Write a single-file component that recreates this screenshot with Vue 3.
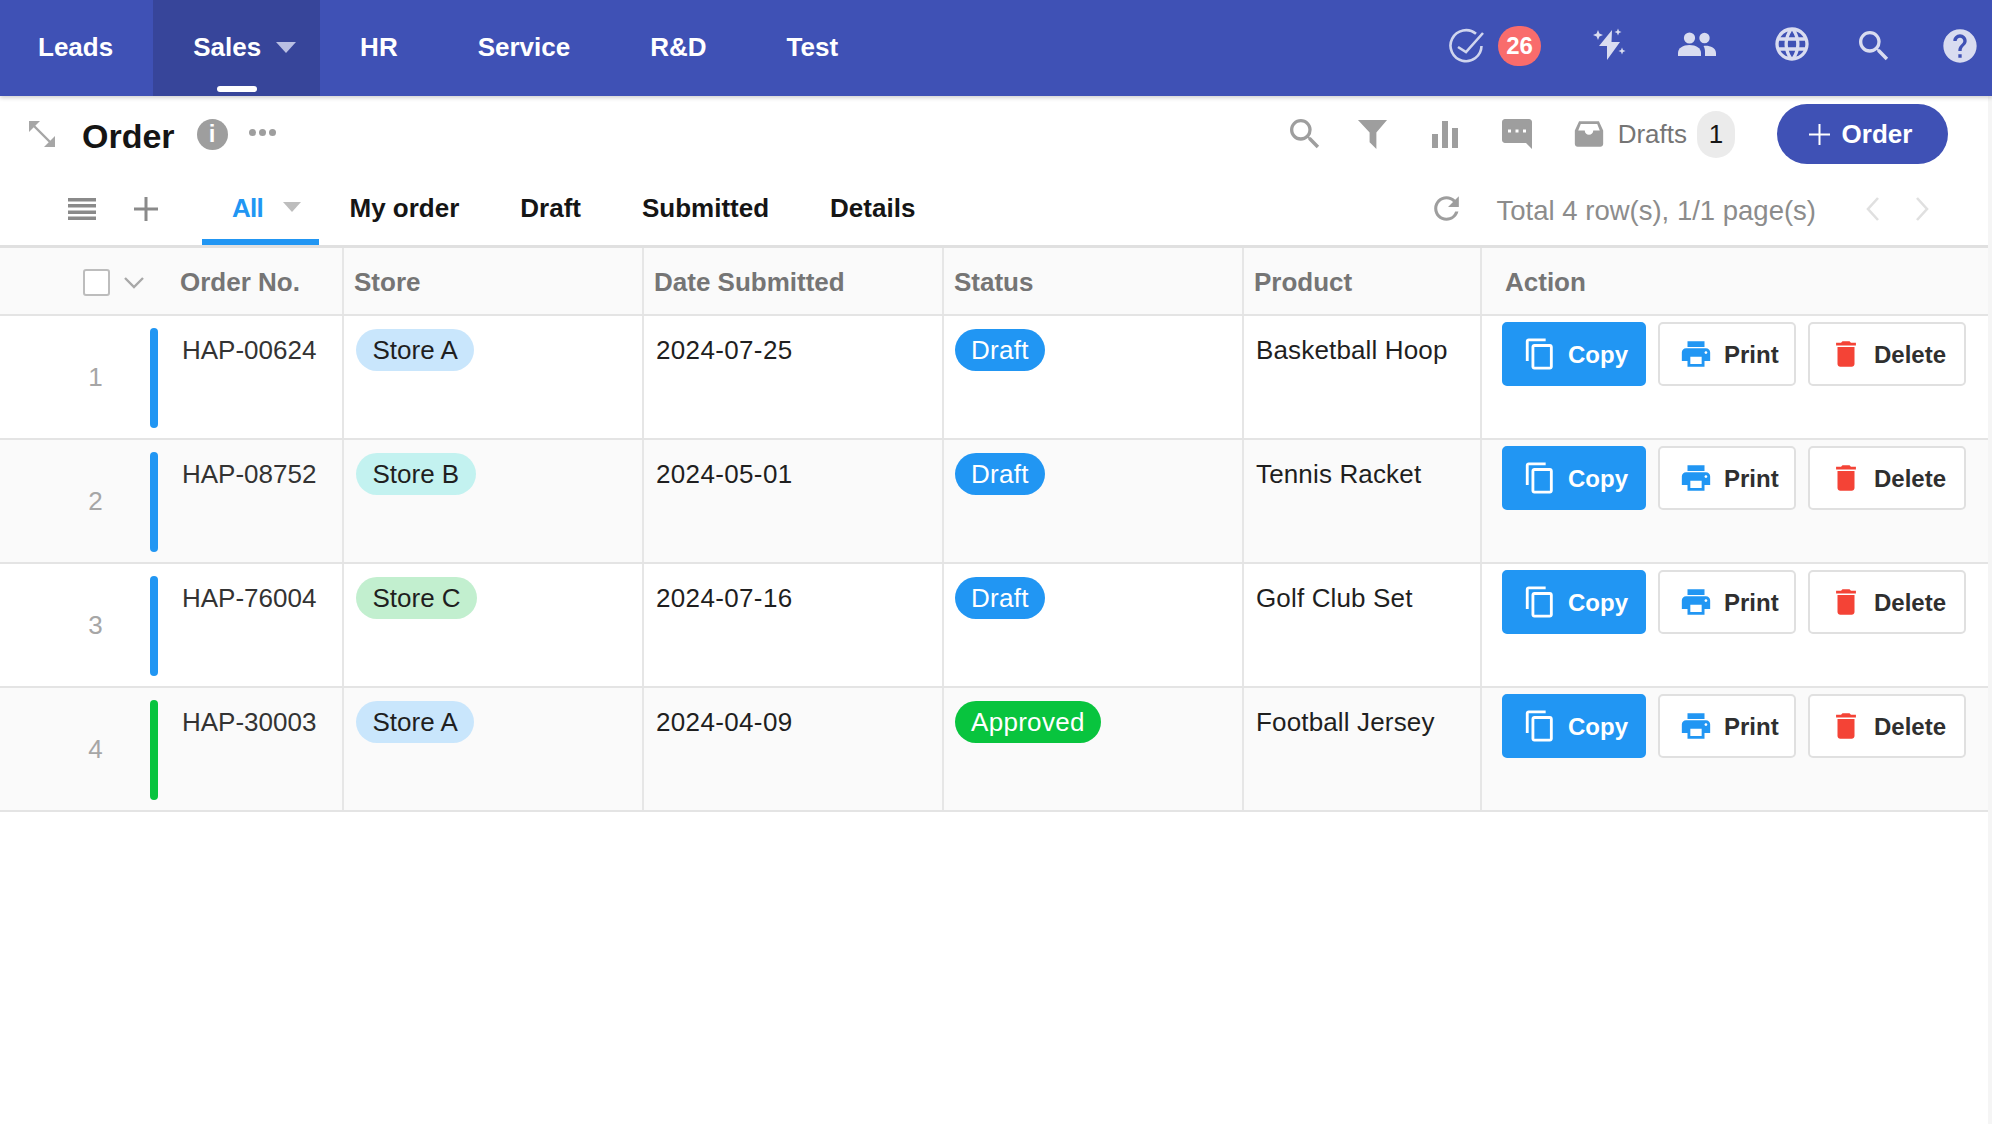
<script setup>
const navs = ['Leads', 'Sales', 'HR', 'Service', 'R&D', 'Test']
const tabs = ['My order', 'Draft', 'Submitted', 'Details']
const heads = ['Store', 'Date Submitted', 'Status', 'Product']
const rows = [
  { n: 1, id: 'HAP-00624', store: 'Store A', sc: 'a', date: '2024-07-25', status: 'Draft', product: 'Basketball Hoop' },
  { n: 2, id: 'HAP-08752', store: 'Store B', sc: 'b', date: '2024-05-01', status: 'Draft', product: 'Tennis Racket' },
  { n: 3, id: 'HAP-76004', store: 'Store C', sc: 'c', date: '2024-07-16', status: 'Draft', product: 'Golf Club Set' },
  { n: 4, id: 'HAP-30003', store: 'Store A', sc: 'a', date: '2024-04-09', status: 'Approved', product: 'Football Jersey' },
]
const P = {
  search: 'M15.5 14h-.79l-.28-.27A6.47 6.47 0 0 0 16 9.5 6.5 6.5 0 1 0 9.5 16c1.61 0 3.09-.59 4.23-1.57l.27.28v.79l5 4.99L20.49 19l-4.99-5zm-6 0C7.01 14 5 11.99 5 9.5S7.01 5 9.5 5 14 7.01 14 9.5 11.99 14 9.5 14z',
  help: 'M12 2C6.48 2 2 6.48 2 12s4.48 10 10 10 10-4.48 10-10S17.52 2 12 2zm1 17h-2v-2h2v2zm2.07-7.75l-.9.92C13.45 12.9 13 13.5 13 15h-2v-.5c0-1.1.45-2.1 1.17-2.83l1.24-1.26c.37-.36.59-.86.59-1.41 0-1.1-.9-2-2-2s-2 .9-2 2H8c0-2.21 1.79-4 4-4s4 1.79 4 4c0 .88-.36 1.68-.93 2.25z',
  globe: 'M11.99 2C6.47 2 2 6.48 2 12s4.47 10 9.99 10C17.52 22 22 17.52 22 12S17.52 2 11.99 2zm6.93 6h-2.95c-.32-1.25-.78-2.45-1.38-3.56 1.84.63 3.37 1.91 4.33 3.56zM12 4.04c.83 1.2 1.48 2.53 1.91 3.96h-3.82c.43-1.43 1.08-2.76 1.91-3.96zM4.26 14C4.1 13.36 4 12.69 4 12s.1-1.36.26-2h3.38c-.08.66-.14 1.32-.14 2 0 .68.06 1.34.14 2H4.26zm.82 2h2.95c.32 1.25.78 2.45 1.38 3.56-1.84-.63-3.37-1.9-4.33-3.56zm2.95-8H5.08c.96-1.66 2.49-2.93 4.33-3.56C8.81 5.55 8.35 6.75 8.03 8zM12 19.96c-.83-1.2-1.48-2.53-1.91-3.96h3.82c-.43 1.43-1.08 2.76-1.91 3.96zM14.34 14H9.66c-.09-.66-.16-1.32-.16-2 0-.68.07-1.35.16-2h4.68c.09.65.16 1.32.16 2 0 .68-.07 1.34-.16 2zm.25 5.56c.6-1.11 1.06-2.31 1.38-3.56h2.95c-.96 1.65-2.49 2.93-4.33 3.56zM16.36 14c.08-.66.14-1.32.14-2 0-.68-.06-1.34-.14-2h3.38c.16.64.26 1.31.26 2s-.1 1.36-.26 2h-3.38z',
  refresh: 'M17.65 6.35A7.958 7.958 0 0 0 12 4c-4.42 0-7.99 3.58-7.99 8s3.57 8 7.99 8c3.73 0 6.84-2.55 7.73-6h-2.08A5.99 5.99 0 0 1 12 18c-3.31 0-6-2.69-6-6s2.69-6 6-6c1.66 0 3.14.69 4.22 1.78L13 11h7V4l-2.35 2.35z',
  copy: 'M16 1H4c-1.1 0-2 .9-2 2v14h2V3h12V1zm3 4H8c-1.1 0-2 .9-2 2v14c0 1.1.9 2 2 2h11c1.1 0 2-.9 2-2V7c0-1.1-.9-2-2-2zm0 16H8V7h11v14z',
  print: 'M19 8H5c-1.66 0-3 1.34-3 3v6h4v4h12v-4h4v-6c0-1.66-1.34-3-3-3zm-3 11H8v-5h8v5zm3-7c-.55 0-1-.45-1-1s.45-1 1-1 1 .45 1 1-.45 1-1 1zm-1-9H6v4h12V3z',
  del: 'M6 19c0 1.1.9 2 2 2h8c1.1 0 2-.9 2-2V7H6v12zM19 4h-3.5l-1-1h-5l-1 1H5v2h14V4z',
  chat: 'M20 2H4c-1.1 0-2 .9-2 2v12c0 1.1.9 2 2 2h14l4 4V4c0-1.1-.9-2-2-2zM8 11H6V9h2v2zm5 0h-2V9h2v2zm5 0h-2V9h2v2z',
  inbox: 'M19 3H5L2 9.5V19c0 1.1.9 2 2 2h16c1.1 0 2-.9 2-2V9.5L19 3zM6.2 5h11.6l1.8 4.5H15c0 1.7-1.3 3-3 3s-3-1.3-3-3H4.4L6.2 5z',
}
</script>

<template>
  <div class="page">
    <header class="nav">
      <a v-for="n in navs" :key="n" class="nav-item" :class="{ active: n === 'Sales' }">
        {{ n }}
        <i v-if="n === 'Sales'" class="nav-caret"></i>
        <i v-if="n === 'Sales'" class="nav-line"></i>
      </a>
      <div class="nav-right">
        <div class="tasks">
          <svg class="ic36" viewBox="0 0 36 36" fill="none" stroke="#d0d5ee" stroke-width="2.6">
            <path d="M28 5.800A15.500 15.500 0 1 0 33.500 18" />
            <path d="M10 19l8 5L35 5" />
          </svg>
          <span class="count">26</span>
        </div>
        <svg class="ic-bolt" viewBox="0 0 36 36" fill="#d9dcf0">
          <path d="M21 2 8 18h8v14l13-18h-8.500z" />
          <path d="M7 2l1.400 3.600L12 7 8.400 8.400 7 12 5.600 8.400 2 7l3.600-1.400z" />
          <path d="M27 .5l1 2.500 2.500 1-2.500 1-1 2.500-1-2.500-2.500-1 2.500-1z" />
          <path d="M31 19.500l1 2.500 2.500 1-2.500 1-1 2.500-1-2.500-2.500-1 2.500-1z" />
        </svg>
        <svg class="ic-people" viewBox="0 0 38 24" fill="#d9dcf0">
          <circle cx="11.500" cy="6" r="5.600" />
          <circle cx="26.500" cy="6" r="5.200" />
          <path d="M0 24v-3c0-5 5-8 11.500-8s11.500 3 11.500 8v3z" />
          <path d="M25.500 14c5-1 12.500 1.500 12.500 7v3H27v-4c0-2.500-.5-4.500-1.500-6z" />
        </svg>
        <svg class="ic-globe" viewBox="0 0 24 24" fill="#d9dcf0"><path :d="P.globe" /></svg>
        <svg class="ic-search" viewBox="0 0 24 24" fill="#d9dcf0"><path :d="P.search" /></svg>
        <svg class="ic-help" viewBox="0 0 24 24" fill="#d9dcf0"><path :d="P.help" /></svg>
      </div>
    </header>

    <main class="content">
      <section class="bar">
        <svg class="expand" viewBox="0 0 26 26" fill="#a6a6a6" stroke="#a6a6a6" stroke-width="2.400">
          <path d="M0 0h11L0 11z" stroke="none" /><path d="M26 26H15l11-11z" stroke="none" /><path d="M5 5l16 16" fill="none" />
        </svg>
        <h1 class="title">Order</h1>
        <span class="info">i</span>
        <span class="dots"><i></i><i></i><i></i></span>
        <div class="bar-right">
          <svg class="t-search" viewBox="0 0 24 24" fill="#9e9e9e"><path :d="P.search" /></svg>
          <svg class="t-filter" viewBox="0 0 32 32" fill="#9e9e9e"><path d="M1 1h30L20 14v17l-7-7V14z" /></svg>
          <svg class="t-bars" viewBox="0 0 32 32" fill="#9e9e9e"><path d="M3 16h6v14H3zM13 3h6v27h-6zM23 10h6v20h-6z" /></svg>
          <svg class="t-chat" viewBox="0 0 24 24" fill="#9e9e9e"><path :d="P.chat" /></svg>
          <div class="drafts">
            <svg class="inbox" viewBox="0 0 24 24" fill="#9e9e9e"><path :d="P.inbox" /></svg>
            <span class="drafts-text">Drafts</span>
            <span class="drafts-count">1</span>
          </div>
          <button class="add">
            <svg class="plus" viewBox="0 0 21 21" fill="#fff"><path d="M9.500 0h2v9.500H21v2h-9.500V21h-2v-9.500H0v-2h9.500z" /></svg>Order
          </button>
        </div>
      </section>

      <section class="tabs">
        <div class="view-tools">
          <svg class="menu" viewBox="0 0 28 22" fill="#8a8a8a"><path d="M0 0h28v3.400H0zM0 6h28v3.400H0zM0 12.500h28v3.400H0zM0 18.600h28V22H0z" /></svg>
          <svg class="add-view" viewBox="0 0 24 24" fill="#8a8a8a"><path d="M10.500 0h3v10.500H24v3H13.500V24h-3V13.500H0v-3h10.500z" /></svg>
        </div>
        <a class="tab on"><span class="tab-label">All</span><i class="tab-caret"></i></a>
        <a v-for="t in tabs" :key="t" class="tab">{{ t }}</a>
        <div class="pager">
          <svg class="refresh" viewBox="0 0 24 24" fill="#9e9e9e"><path :d="P.refresh" /></svg>
          <span class="total">Total 4 row(s), 1/1 page(s)</span>
          <svg class="chev" viewBox="0 0 16 28" fill="none" stroke="#e0e0e0" stroke-width="2.600"><path d="M13 3 3 14l10 11" /></svg>
          <svg class="chev" viewBox="0 0 16 28" fill="none" stroke="#e0e0e0" stroke-width="2.600"><path d="M3 3l10 11L3 25" /></svg>
        </div>
      </section>

      <section class="table">
        <div class="tr head">
          <div class="cell first">
            <div class="ctl"><span class="check"></span>
              <svg class="down" viewBox="0 0 22 13" fill="none" stroke="#a8a8a8" stroke-width="2.400"><path d="M2 2l9 9 9-9" /></svg>
            </div>
            <span class="th">Order No.</span>
          </div>
          <div v-for="h in heads" :key="h" class="cell"><span class="th">{{ h }}</span></div>
          <div class="cell action-head"><span class="th">Action</span></div>
        </div>
        <div v-for="r in rows" :key="r.n" class="tr row" :class="{ alt: r.n % 2 === 0 }">
          <div class="cell first body">
            <span class="num">{{ r.n }}</span>
            <i class="mark" :class="{ ok: r.status === 'Approved' }"></i>
            <span class="oid">{{ r.id }}</span>
          </div>
          <div class="cell body"><span class="pill" :class="r.sc">{{ r.store }}</span></div>
          <div class="cell body"><span class="txt date">{{ r.date }}</span></div>
          <div class="cell body"><span class="pill st" :class="{ ok: r.status === 'Approved' }">{{ r.status }}</span></div>
          <div class="cell body"><span class="txt prod">{{ r.product }}</span></div>
          <div class="cell body actions">
            <button class="btn primary">
              <svg class="b-ic" viewBox="0 0 24 24" fill="#fff"><path :d="P.copy" /></svg>Copy
            </button>
            <button class="btn">
              <svg class="b-ic" viewBox="0 0 24 24" fill="#2196f3"><path :d="P.print" /></svg>Print
            </button>
            <button class="btn danger">
              <svg class="b-ic" viewBox="0 0 24 24" fill="#f44336"><path :d="P.del" /></svg>Delete
            </button>
          </div>
        </div>
      </section>
    </main>
  </div>
</template>

<style scoped>
.page { width: 1992px; height: 1124px; overflow: hidden; background: #fff; font-family: "Liberation Sans", Arial, sans-serif; color: #1f1f1f; }
i { display: block; }

.nav { height: 96px; background: #3f51b5; display: flex; align-items: stretch; box-shadow: 0 2px 4px rgba(0,0,0,.18); position: relative; z-index: 2; }
.nav-item { position: relative; display: flex; align-items: center; padding: 0 40px 2px; font-size: 26px; font-weight: 700; color: #fff; }
.nav-item:first-child { padding-left: 38px; }
.nav-item.active { background: #37459a; padding-right: 39px; }
.nav-caret { width: 0; height: 0; margin-left: 15px; margin-right: -15px; border-left: 10px solid transparent; border-right: 10px solid transparent; border-top: 11px solid #b9bfe3; }
.nav-line { position: absolute; left: 64px; bottom: 4px; width: 40px; height: 6px; border-radius: 3px; background: #fff; }
.nav-right { margin-left: auto; display: flex; align-items: center; padding: 0 12px 4px 0; }
.tasks { display: flex; align-items: center; gap: 14px; margin-right: 50px; }
.ic36 { width: 36px; height: 36px; }
.count { width: 43px; height: 40px; border-radius: 20px; background: #f96c6c; color: #fff; font-weight: 700; font-size: 24px; display: flex; align-items: center; justify-content: center; }
.ic-bolt { width: 36px; height: 36px; margin-right: 51px; }
.ic-people { width: 38px; height: 24px; margin-right: 56px; margin-top: -4px; }
.ic-globe { width: 40px; height: 40px; margin-right: 42px; margin-top: -4px; }
.ic-search { width: 40px; height: 40px; margin-right: 46px; }
.ic-help { width: 40px; height: 40px; }

.content { height: 1028px; box-sizing: border-box; border-right: 4px solid #f5f5f5; }
.bar { height: 82px; box-sizing: border-box; padding: 0 0 6px 29px; display: flex; align-items: center; }
.expand { width: 26px; height: 26px; }
.title { margin: 0 0 0 27px; font-size: 34px; line-height: 40px; font-weight: 700; color: #151515; position: relative; top: 2px; }
.info { width: 31px; height: 31px; margin-left: 22px; border-radius: 50%; background: #9e9e9e; color: #fff; font-size: 24px; font-weight: 700; display: flex; align-items: center; justify-content: center; }
.dots { display: flex; gap: 3px; margin-left: 21px; margin-top: -3px; }
.dots i { width: 7px; height: 7px; border-radius: 50%; background: #9e9e9e; }
.bar-right { margin-left: auto; display: flex; align-items: center; padding-right: 40px; }
.t-search { width: 40px; height: 40px; margin-right: 31px; }
.t-filter { width: 33px; height: 31px; margin-right: 39px; }
.t-bars { width: 34px; height: 32px; margin-right: 37px; }
.t-chat { width: 36px; height: 36px; margin-right: 37px; }
.drafts { display: flex; align-items: center; margin-right: 42px; }
.inbox { width: 34px; height: 34px; margin-right: 12px; }
.drafts-text { font-size: 26px; color: #757575; }
.drafts-count { width: 38px; height: 47px; margin-left: 10px; border-radius: 19px; background: #ebebeb; font-size: 26px; color: #151515; display: flex; align-items: center; justify-content: center; }
.add { width: 171px; height: 60px; padding: 0 4px 0 0; border: 0; border-radius: 30px; background: #3f51b5; color: #fff; font: 700 26px "Liberation Sans", Arial, sans-serif; display: flex; align-items: center; justify-content: center; }
.plus { width: 21px; height: 21px; margin-right: 12px; }

.tabs { height: 67px; display: flex; align-items: stretch; }
.view-tools { width: 202px; height: 61px; display: flex; align-items: center; padding-left: 68px; box-sizing: border-box; }
.menu { width: 28px; height: 22px; }
.add-view { width: 24px; height: 24px; margin-left: 38px; }
.tab { display: flex; align-items: center; padding: 0 30.5px; font-size: 26px; font-weight: 700; color: #151515; height: 61px; }
.tab.on { width: 117px; padding: 0 0 0 30px; box-sizing: border-box; color: #2196f3; border-bottom: 6px solid #2196f3; height: 67px; }
.tab-label { letter-spacing: -.8px; }
.tab-caret { width: 0; height: 0; margin-left: 20px; margin-top: -4px; border-left: 9px solid transparent; border-right: 9px solid transparent; border-top: 10px solid #bdbdbd; }
.pager { margin-left: auto; display: flex; align-items: center; padding-right: 58px; height: 61px; }
.refresh { width: 37px; height: 37px; margin-right: 32px; }
.total { font-size: 27.5px; color: #8c8c8c; margin-top: 5px; margin-right: 49px; }
.chev { width: 16px; height: 28px; margin-right: 33px; }
.chev:last-child { margin-right: 0; }

.table { border-top: 3px solid #e0e0e0; }
.tr { display: grid; grid-template-columns: 344px 300px 300px 300px 238px 506px; border-bottom: 2px solid #e4e4e4; box-sizing: border-box; }
.head { height: 68px; background: #fafafa; }
.row { height: 124px; }
.alt { background: #fafafa; }
.cell { border-right: 2px solid #e6e6e6; box-sizing: border-box; padding: 0 10px; display: flex; align-items: flex-start; }
.cell:last-child { border-right: 0; }
.head .cell { align-items: center; padding-top: 2px; }
.head .cell.first { padding: 2px 0 0; }
.ctl { width: 180px; padding-left: 83px; box-sizing: border-box; display: flex; align-items: center; }
.check { width: 27px; height: 27px; border: 2px solid #bdbdbd; border-radius: 3px; background: #fff; box-sizing: border-box; }
.down { width: 22px; height: 13px; margin-left: 13px; }
.th { font-size: 26px; font-weight: 700; color: #757575; }
.head .action-head { padding-left: 23px; }
.body { padding-top: 13px; }
.first.body { padding: 0; align-items: flex-start; }
.num { width: 150px; padding-left: 41px; box-sizing: border-box; text-align: center; font-size: 26px; color: #a6a6a6; margin-top: 46px; }
.mark { width: 8px; height: 100px; margin-top: 12px; border-radius: 4px; background: #2196f3; }
.mark.ok { background: #08c43e; }
.oid { margin-left: 24px; margin-top: 19px; font-size: 26px; line-height: 30px; color: #333; }
.txt { font-size: 26px; line-height: 30px; color: #1f1f1f; padding: 6px 2px 0; }
.date { letter-spacing: .35px; }
.prod { letter-spacing: .15px; }
.pill { height: 42px; line-height: 42px; margin-left: 2px; border-radius: 21px; padding: 0 16.5px; font-size: 26px; color: #1f1f1f; }
.pill.a { background: #c9e6fc; }
.pill.b { background: #c3f2f0; }
.pill.c { background: #c2efcf; }
.pill.st { background: #2196f3; color: #fff; letter-spacing: .3px; margin-left: 0.5px; }
.pill.st.ok { background: #08c43e; }
.actions { padding: 6px 0 0 20px; gap: 12px; }
.btn { height: 64px; display: flex; align-items: center; border: 2px solid #e0e0e0; border-radius: 5px; background: #fff; font: 700 24px "Liberation Sans", Arial, sans-serif; color: #2f2f2f; padding: 1px 0 0 19px; width: 138px; box-sizing: border-box; }
.b-ic { width: 34px; height: 34px; margin: -1px 11px 0 0; flex: none; }
.btn.primary { width: 144px; background: #2196f3; border-color: #2196f3; color: #fff; }
.btn.danger { width: 158px; }
</style>
